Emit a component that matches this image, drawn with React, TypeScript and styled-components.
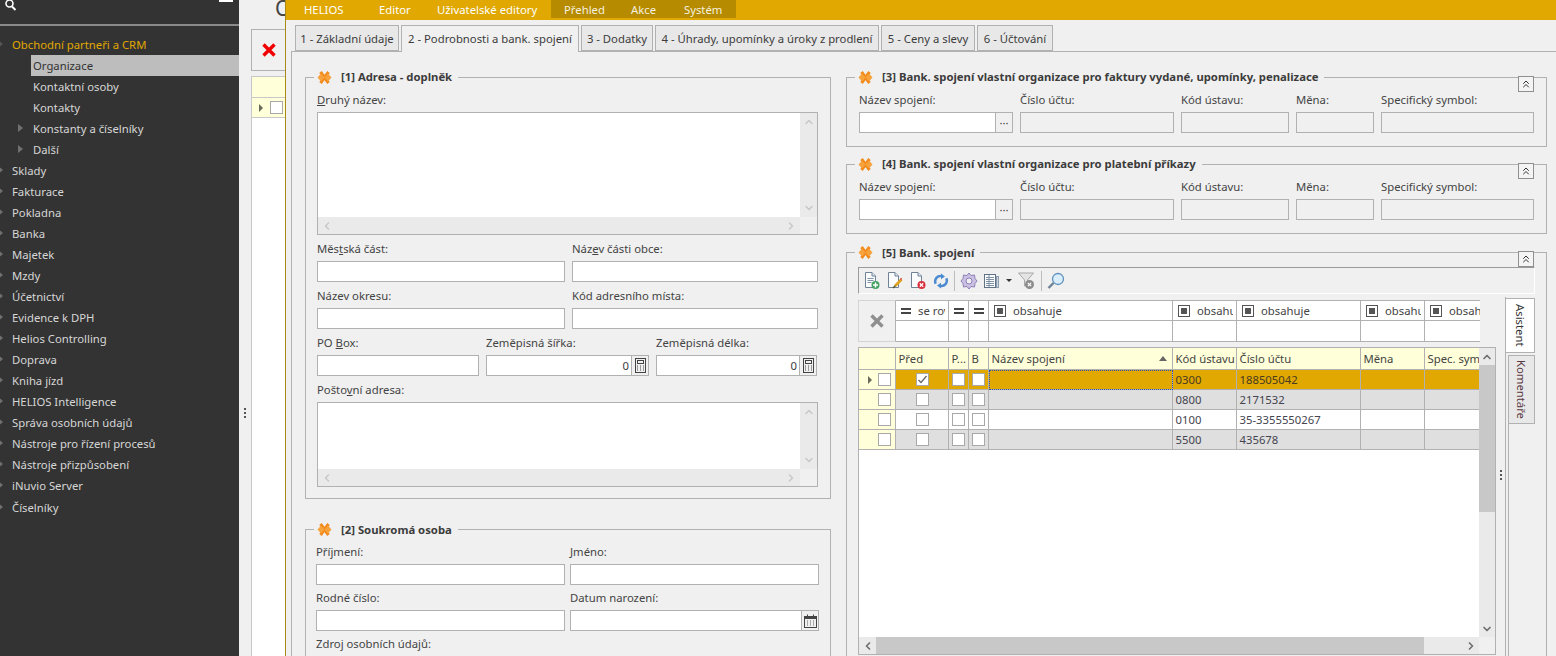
import React from "react";
import styled, { createGlobalStyle } from "styled-components";
import { ChevronUp, ChevronDown, ChevronLeft, ChevronRight, ChevronsUp } from "lucide-react";

const GlobalStyle = createGlobalStyle`
  html, body {
    margin: 0;
    padding: 0;
    background: #f0f0f0;
  }
  * {
    box-sizing: border-box;
  }
`;

const line = "#b1b1b1";
const gold = "#e0a800";

const Page = styled.div`
  display: flex;
  width: 1556px;
  height: 656px;
  overflow: hidden;
  font-family: "Noto Sans", "Open Sans", sans-serif;
  font-size: 11.3px;
  color: #3c3c3c;
`;

/* left navigation */
const Sidebar = styled.nav`
  flex: 0 0 239px;
  background: #333333;
  color: #d6d6d6;
`;

const SearchBar = styled.div`
  display: flex;
  justify-content: space-between;
  height: 26px;
  padding-right: 6px;
  border-bottom: 2px solid #8a8a8a;
  svg {
    margin: -1px 0 0 4px;
  }
`;

const SearchMark = styled.span`
  width: 14px;
  height: 2px;
  background: #ffffff;
`;

const Tree = styled.ul`
  list-style: none;
  margin: 7.5px 0 0;
  padding: 0;
`;

const TreeRow = styled.li<{ $level: number; $active?: boolean; $selected?: boolean }>`
  position: relative;
  height: 21.05px;
  line-height: 21px;
  margin-left: ${(p) => (p.$level ? 31 : 0)}px;
  padding-left: ${(p) => (p.$level ? 2 : 12)}px;
  color: ${(p) => (p.$active ? gold : p.$selected ? "#333333" : "#d6d6d6")};
  background: ${(p) => (p.$selected ? "#bdbdbd" : "transparent")};
`;

const TreeArrow = styled.i<{ $level: number; $open?: boolean }>`
  position: absolute;
  top: 6px;
  left: ${(p) => (p.$level ? -13 : -2)}px;
  width: 0;
  height: 0;
  border-style: solid;
  border-width: 4px 0 4px 5px;
  border-color: transparent transparent transparent ${(p) => (p.$open ? "#555555" : "#707070")};
`;

/* the window behind */
const BackPane = styled.div`
  flex: 0 0 46px;
  min-width: 0;
  display: flex;
  overflow: hidden;
  background: #f0f0f0;
`;

const Splitter = styled.div`
  flex: 0 0 12px;
  padding: 408px 0 0 5px;
`;

const Dots = styled.div`
  display: flex;
  flex-direction: column;
  gap: 2px;
  span {
    width: 2px;
    height: 2px;
    background: #555555;
  }
`;

const BackColumn = styled.div`
  flex: 1;
  min-width: 0;
  display: flex;
  flex-direction: column;
`;

const BackTitle = styled.div`
  height: 29px;
  padding-left: 24px;
  overflow: hidden;
  white-space: nowrap;
  font-size: 21px;
  line-height: 16px;
  color: #444444;
`;

const BackTools = styled.div`
  display: flex;
  align-items: center;
  height: 42px;
  padding-left: 10px;
  border: 1px solid ${line};
  border-right: 0;
`;

const BackGrid = styled.div`
  flex: 1;
  margin-top: 5px;
  background: #ffffff;
  border-left: 1px solid #c8c8c8;
`;

const BackHead = styled.div`
  height: 22px;
  background: #ffffd9;
  border-top: 1px solid #c8c8c8;
  border-bottom: 1px solid #c8c8c8;
`;

const BackRow = styled.div`
  display: flex;
  align-items: center;
  height: 20px;
  padding-left: 7px;
  gap: 7px;
  overflow: hidden;
  background: #ffffd9;
  border-bottom: 1px solid #c8c8c8;
`;

/* front window */
const Window = styled.main`
  flex: 1;
  min-width: 0;
  display: flex;
  flex-direction: column;
  border-left: 1px solid #a98a12;
  background: #f0f0f0;
`;

const MenuBar = styled.div`
  display: flex;
  flex: 0 0 20px;
  height: 20px;
  padding-left: 18px;
  background: ${gold};
  color: #ffffff;
  line-height: 19px;
`;

const MenuItem = styled.span<{ $w: number }>`
  width: ${(p) => p.$w}px;
  white-space: nowrap;
`;

const MenuGroup = styled.div`
  display: flex;
  height: 18px;
  padding-left: 13px;
  background: #b68b00;
  color: #f4f0df;
`;

const TabStrip = styled.div`
  display: flex;
  gap: 2px;
  height: 32px;
  padding: 5px 0 0 9px;
  margin-bottom: -1px;
`;

const Tab = styled.div<{ $w: number; $on?: boolean }>`
  position: relative;
  z-index: ${(p) => (p.$on ? 1 : 0)};
  width: ${(p) => p.$w}px;
  height: ${(p) => (p.$on ? 27 : 26)}px;
  text-align: center;
  line-height: 25px;
  white-space: nowrap;
  background: ${(p) => (p.$on ? "#f0f0f0" : "#e8e8e8")};
  border: 1px solid ${line};
  border-bottom: ${(p) => (p.$on ? "0" : `1px solid ${line}`)};
`;

const TabPanel = styled.div`
  flex: 1;
  min-height: 0;
  display: flex;
  gap: 15px;
  margin-left: 5px;
  padding: 17px 9px 0 13px;
  overflow: hidden;
  border-top: 1px solid ${line};
  border-left: 1px solid ${line};
`;

const LeftColumn = styled.div`
  flex: 0 0 526px;
  display: flex;
  flex-direction: column;
  gap: 22px;
`;

const RightColumn = styled.div`
  flex: 1;
  min-width: 0;
  display: flex;
  flex-direction: column;
  gap: 9px;
`;

const Group = styled.fieldset<{
  $top?: number;
  $right?: number;
  $bottom?: number;
  $left?: number;
  $shift?: number;
  $lift?: boolean;
}>`
  position: relative;
  min-width: 0;
  margin: ${(p) => p.$shift ?? 0}px 0 0;
  padding: ${(p) => p.$top ?? 8}px ${(p) => p.$right ?? 12}px ${(p) => p.$bottom ?? 13}px ${(p) => p.$left ?? 12}px;
  border: 1px solid ${line};
  legend {
    margin-left: ${(p) => 8 - (p.$left ?? 12)}px;
  }
  legend span {
    margin-bottom: ${(p) => (p.$lift ? 2 : 0)}px;
  }
`;

const GroupTitle = styled.legend`
  display: flex;
  align-items: center;
  gap: 9px;
  height: 16px;
  padding: 0 6px 0 3px;
  font-weight: 700;
  color: #3c3c3c;
`;

const Collapse = styled.button`
  position: absolute;
  top: -9px;
  right: 12px;
  display: flex;
  align-items: center;
  justify-content: center;
  width: 16px;
  height: 16px;
  padding: 0;
  background: #f4f4f4;
  border: 1px solid #8f8f8f;
  color: #333333;
`;

const Stack = styled.div<{ $gap: number }>`
  display: flex;
  flex-direction: column;
  gap: ${(p) => p.$gap}px;
`;

const Columns = styled.div<{ $cols: string; $gap: number }>`
  display: grid;
  grid-template-columns: ${(p) => p.$cols};
  column-gap: ${(p) => p.$gap}px;
`;

const Field = styled.div`
  min-width: 0;
`;

const Label = styled.div`
  height: 19px;
  line-height: 13px;
  white-space: nowrap;
  color: #444444;
`;

const Input = styled.div<{ $off?: boolean; $right?: boolean }>`
  flex: 1;
  min-width: 0;
  height: 21px;
  padding-right: 2px;
  line-height: 19px;
  text-align: ${(p) => (p.$right ? "right" : "left")};
  background: ${(p) => (p.$off ? "#f0f0f0" : "#ffffff")};
  border: 1px solid ${line};
`;

const InputRow = styled.div`
  display: flex;
`;

const SideButton = styled.div`
  flex: 0 0 17px;
  display: flex;
  align-items: center;
  justify-content: center;
  height: 21px;
  line-height: 14px;
  background: #f0f0f0;
  border: 1px solid ${line};
  border-left: 0;
  color: #444444;
`;

/* multi line box with its scrollbars */
const Memo = styled.div<{ $h: number }>`
  display: grid;
  grid-template-columns: 1fr 17px;
  grid-template-rows: 1fr 17px;
  height: ${(p) => p.$h}px;
  background: #ffffff;
  border: 1px solid ${line};
`;

const Track = styled.div<{ $dir: "row" | "column" }>`
  display: flex;
  flex-direction: ${(p) => p.$dir};
  justify-content: space-between;
  align-items: center;
  padding: ${(p) => (p.$dir === "row" ? "0 3px" : "3px 0")};
  background: #eaeaea;
  color: #c8c8c8;
`;

const Corner = styled.div`
  background: #f0f0f0;
`;

/* grid in group 5 */
const Toolbar = styled.div`
  display: flex;
  align-items: center;
  height: 27px;
  padding-left: 5px;
  border-top: 1px solid #9b9b9b;
  border-left: 1px solid #9b9b9b;
  border-right: 1px solid #ffffff;
  border-bottom: 1px solid #ffffff;
  svg {
    display: block;
  }
`;

const ToolGroup = styled.div<{ $gap: number }>`
  display: flex;
  align-items: center;
  gap: ${(p) => p.$gap}px;
`;

const ToolSep = styled.span`
  width: 1px;
  height: 20px;
  margin: 0 5px;
  background: #bcbcbc;
`;

const GridRow = styled.div`
  display: flex;
  margin-top: 3px;
  height: 361px;
`;

const GridStack = styled.div`
  flex: 0 0 638px;
  padding-top: 3px;
`;

const Gutter = styled.div`
  flex: 0 0 9px;
  display: flex;
  align-items: center;
  padding: 0 0 5px 4px;
`;

const FilterBox = styled.div`
  display: flex;
  width: 622px;
  height: 42px;
  overflow: hidden;
`;

const FilterClear = styled.div`
  flex: 0 0 38px;
  display: flex;
  align-items: center;
  justify-content: center;
  border: 1px solid #d4d4d4;
  border-right-color: ${line};
`;

const FilterCols = styled.div`
  flex: 1;
  min-width: 0;
  overflow: hidden;
`;

const columns = "53px 20px 20px 184px 64px 124px 64px 64px";

const FilterLine = styled.div<{ $h: number }>`
  display: grid;
  grid-template-columns: ${columns};
  height: ${(p) => p.$h}px;
`;

const FilterCell = styled.div`
  display: flex;
  align-items: center;
  gap: 7px;
  padding: 0 3px 0 5px;
  overflow: hidden;
  white-space: nowrap;
  background: #ffffff;
  border-right: 1px solid ${line};
  border-bottom: 1px solid ${line};
  svg {
    flex: none;
  }
`;

const FilterTop = styled(FilterCell)`
  border-top: 1px solid ${line};
  color: #444444;
`;

const FilterText = styled.span`
  min-width: 0;
  overflow: hidden;
`;

const DataBox = styled.div`
  display: grid;
  grid-template-columns: 1fr 16px;
  grid-template-rows: 1fr 17px;
  height: 308px;
  margin-top: 5px;
  background: #ffffff;
  border: 1px solid ${line};
`;

const DataScroll = styled.div`
  min-width: 0;
  overflow: hidden;
`;

const DataRow = styled.div<{ $bg: string }>`
  display: grid;
  grid-template-columns: 37px ${columns};
  height: 20px;
  background: ${(p) => p.$bg};
  color: ${(p) => (p.$bg === gold ? "#4a3a20" : "#44444f")};
`;

const HeadRow = styled(DataRow)`
  height: 22px;
  color: #444444;
`;

const Cell = styled.div<{ $center?: boolean; $focus?: boolean }>`
  display: flex;
  align-items: center;
  justify-content: ${(p) => (p.$center ? "center" : "flex-start")};
  padding-left: ${(p) => (p.$center ? 0 : 2.5)}px;
  overflow: hidden;
  white-space: nowrap;
  border-right: 1px solid ${line};
  border-bottom: 1px solid ${line};
  outline: ${(p) => (p.$focus ? "1px dotted #2a4fb0" : "none")};
  outline-offset: -1px;
`;

const Sort = styled.i`
  margin-left: auto;
  margin-right: 5px;
  width: 0;
  height: 0;
  border-style: solid;
  border-width: 0 4px 5px 4px;
  border-color: transparent transparent #666666 transparent;
`;

const MarkerCell = styled(Cell)`
  justify-content: flex-end;
  gap: 6px;
  padding-right: 4px;
  background: #ffffd9;
`;

const RowArrow = styled.i`
  flex: none;
  width: 0;
  height: 0;
  border-style: solid;
  border-width: 4px 0 4px 4px;
  border-color: transparent transparent transparent #6a6a5a;
`;

const Check = styled.span`
  flex: none;
  display: flex;
  align-items: center;
  justify-content: center;
  width: 13px;
  height: 13px;
  background: #ffffff;
  border: 1px solid #a8a8a8;
`;

const DataV = styled.div`
  display: flex;
  flex-direction: column;
  align-items: center;
  background: #eaeaea;
  color: #707070;
`;

const ArrowSlot = styled.div`
  flex: 0 0 17px;
  display: flex;
  align-items: center;
  justify-content: center;
`;

const ThumbV = styled.div`
  flex: 0 0 147px;
  width: 100%;
  background: #c8c8c8;
`;

const DataH = styled.div`
  display: flex;
  align-items: center;
  background: #eaeaea;
  color: #707070;
`;

const ThumbH = styled.div`
  flex: 0 0 548px;
  height: 100%;
  background: #c8c8c8;
`;

const Spring = styled.div`
  flex: 1;
`;

/* tabs standing on end at the right */
const SideRail = styled.div`
  flex: 0 0 30px;
  display: flex;
  flex-direction: column;
  padding-top: 1px;
  border-left: 1px solid ${line};
`;

const SideTab = styled.div<{ $h: number; $on?: boolean }>`
  flex: 0 0 ${(p) => p.$h}px;
  display: flex;
  align-items: center;
  justify-content: center;
  margin-left: ${(p) => (p.$on ? 0 : 2)}px;
  margin-bottom: ${(p) => (p.$on ? 2 : 0)}px;
  writing-mode: vertical-rl;
  background: ${(p) => (p.$on ? "#ffffff" : "#e8e8e8")};
  border: 1px solid ${line};
  border-left: ${(p) => (p.$on ? "0" : `1px solid ${line}`)};
  color: ${(p) => (p.$on ? "#333333" : "#5a3a44")};
`;

const SideRest = styled.div`
  flex: 1;
  margin-left: 2px;
  border-left: 1px solid ${line};
`;

/* drawings */
const Star = () => (
  <svg width="15" height="13" viewBox="0 0 15 13">
    <path d="M3.5 1 L11.5 12 M11.5 1 L3.5 12" stroke="#f28a1c" strokeWidth="3" />
    <path d="M0.5 6.5 L4 2.5 L7.5 6.5 L4 10.5 Z M14.5 6.5 L11 2.5 L7.5 6.5 L11 10.5 Z" fill="#f6a33d" />
  </svg>
);

const Calculator = () => (
  <svg width="11" height="15" viewBox="0 0 11 15" fill="none">
    <rect x="0.5" y="0.5" width="10" height="14" stroke="#444" />
    <rect x="2.5" y="2.5" width="6" height="3" stroke="#444" />
    <path d="M2 8h1M5 8h1M8 8h1M2 10h1M5 10h1M8 10h1M2 12h1M5 12h1M8 12h1" stroke="#444" />
  </svg>
);

const Calendar = () => (
  <svg width="13" height="14" viewBox="0 0 13 14" fill="none">
    <rect x="0.5" y="2.5" width="12" height="11" stroke="#444" />
    <rect x="1" y="3" width="11" height="2" fill="#444" />
    <path d="M3.5 0.5v3M9.5 0.5v3" stroke="#444" />
    <path d="M3 7h1M6 7h1M9 7h1M3 9h1M6 9h1M9 9h1M3 11h1M6 11h1M9 11h1" stroke="#666" />
  </svg>
);

const EqualMark = () => (
  <svg width="10" height="6" viewBox="0 0 10 6">
    <path d="M0 0h10v2H0zM0 4h10v2H0z" fill="#444" />
  </svg>
);

const BoxMark = () => (
  <svg width="12" height="12" viewBox="0 0 12 12">
    <rect x="0.5" y="0.5" width="11" height="11" fill="none" stroke="#555" />
    <rect x="3" y="3" width="6" height="6" fill="#555" />
  </svg>
);

const CrossMark = () => (
  <svg width="14" height="14" viewBox="0 0 14 14">
    <path d="M1.5 1.5 L12.5 12.5 M12.5 1.5 L1.5 12.5" stroke="#8f8f8f" strokeWidth="3.4" />
  </svg>
);

const RedCross = () => (
  <svg width="14" height="14" viewBox="0 0 14 14">
    <path d="M1.5 1.5 L12.5 12.5 M12.5 1.5 L1.5 12.5" stroke="#f00000" strokeWidth="3.4" />
  </svg>
);

const Tick = () => (
  <svg width="11" height="11" viewBox="0 0 11 11">
    <path d="M1.5 6 L4 8.5 L9.5 2" fill="none" stroke="#666" strokeWidth="1.3" />
  </svg>
);

const Sheet = () => (
  <>
    <path d="M1.5 0.5 H8 L11.5 4 V15.5 H1.5 Z" fill="#fbfcfe" stroke="#6f8296" />
    <path d="M8 0.5 V4 H11.5" fill="#dfe8f1" stroke="#6f8296" />
  </>
);

const NewIcon = () => (
  <svg width="18" height="18" viewBox="0 0 18 18">
    <Sheet />
    <path d="M3.5 6.5h6M3.5 8.5h6M3.5 10.5h4" stroke="#8093a6" />
    <circle cx="11.5" cy="13" r="4" fill="#45a263" />
    <path d="M11.5 10.5v5M9 13h5" stroke="#fff" strokeWidth="1.4" />
  </svg>
);

const EditIcon = () => (
  <svg width="18" height="18" viewBox="0 0 18 18">
    <Sheet />
    <path d="M14.5 7.5 L8 14" stroke="#e0a020" strokeWidth="2.6" />
    <path d="M14.5 7.5 L13.5 6.5" stroke="#d05040" strokeWidth="2" />
    <path d="M8.3 13.7 L6 16" stroke="#553" strokeWidth="1.4" />
  </svg>
);

const DeleteIcon = () => (
  <svg width="18" height="18" viewBox="0 0 18 18">
    <Sheet />
    <circle cx="11.5" cy="13" r="4" fill="#d8303c" />
    <path d="M9.8 11.3 L13.2 14.7 M13.2 11.3 L9.8 14.7" stroke="#fff" strokeWidth="1.3" />
  </svg>
);

const RefreshIcon = () => (
  <svg width="16" height="18" viewBox="0 0 18 18" fill="none">
    <path d="M3 12 C1 7 5 2.5 10 3.5" stroke="#4c8bd0" strokeWidth="2.8" />
    <path d="M15 6 C17 11 13 15.5 8 14.5" stroke="#4c8bd0" strokeWidth="2.8" />
    <path d="M9 0.5 L13.5 3.8 L9 7 Z" fill="#4c8bd0" />
    <path d="M9 11 L4.5 14.2 L9 17.5 Z" fill="#4c8bd0" />
  </svg>
);

const GearIcon = () => (
  <svg width="18" height="18" viewBox="0 0 18 18">
    <path
      d="M9 1 L11 3.5 L14.5 3 L15 6.5 L17 9 L15 11.5 L14.5 15 L11 14.5 L9 17 L7 14.5 L3.5 15 L3 11.5 L1 9 L3 6.5 L3.5 3 L7 3.5 Z"
      fill="#c9c0e2"
      stroke="#8f7fb8"
    />
    <circle cx="9" cy="9" r="3" fill="#f0f0f0" stroke="#8f7fb8" />
  </svg>
);

const ListIcon = () => (
  <svg width="16" height="16" viewBox="0 0 16 16" fill="none">
    <rect x="0.5" y="1.5" width="11" height="13" fill="#fafcff" stroke="#5f7286" />
    <path d="M2 4.5h8M2 6.5h8M2 8.5h8M2 10.5h8M2 12.5h8M5 2v12" stroke="#7f91a3" />
    <rect x="12.5" y="3.5" width="2" height="11" fill="#cfd8e2" stroke="#8c9cac" />
  </svg>
);

const DropMark = styled.i`
  margin: 0 6px;
  width: 0;
  height: 0;
  border-style: solid;
  border-width: 3px 3px 0 3px;
  border-color: #333333 transparent transparent transparent;
`;

const FunnelIcon = () => (
  <svg width="18" height="18" viewBox="0 0 18 18">
    <path d="M0.5 1 H15.5 L9.5 8 V13 L6.5 14 V8 Z" fill="#e4e4e4" stroke="#a8a8a8" />
    <circle cx="11.5" cy="12.5" r="4.5" fill="#8c8c8c" />
    <path d="M9.8 10.8 L13.2 14.2 M13.2 10.8 L9.8 14.2" stroke="#fff" strokeWidth="1.2" />
  </svg>
);

const LensIcon = () => (
  <svg width="18" height="18" viewBox="0 0 18 18">
    <circle cx="11" cy="7" r="5.5" fill="#d9edfb" stroke="#5f93bd" strokeWidth="1.3" />
    <path d="M6.5 11 L1.5 16" stroke="#6f8296" strokeWidth="2.4" />
  </svg>
);

const SearchIcon = () => (
  <svg width="14" height="14" viewBox="0 0 14 14" fill="none">
    <circle cx="5.5" cy="4.5" r="3.5" stroke="#fff" strokeWidth="1.6" />
    <path d="M8 7.5 L11.5 11" stroke="#fff" strokeWidth="2" />
  </svg>
);

const treeItems = [
  { text: "Obchodní partneři a CRM", level: 0, active: true, arrow: "open" },
  { text: "Organizace", level: 1, selected: true },
  { text: "Kontaktní osoby", level: 1 },
  { text: "Kontakty", level: 1 },
  { text: "Konstanty a číselníky", level: 1, arrow: "closed" },
  { text: "Další", level: 1, arrow: "closed" },
  ...[
    "Sklady",
    "Fakturace",
    "Pokladna",
    "Banka",
    "Majetek",
    "Mzdy",
    "Účetnictví",
    "Evidence k DPH",
    "Helios Controlling",
    "Doprava",
    "Kniha jízd",
    "HELIOS Intelligence",
    "Správa osobních údajů",
    "Nástroje pro řízení procesů",
    "Nástroje přizpůsobení",
    "iNuvio Server",
    "Číselníky",
  ].map((text) => ({ text, level: 0, arrow: "closed" })),
] as { text: string; level: number; active?: boolean; selected?: boolean; arrow?: string }[];

const tabs = [
  { text: "1 - Základní údaje", w: 104 },
  { text: "2 - Podrobnosti a bank. spojení", w: 178, on: true },
  { text: "3 - Dodatky", w: 72 },
  { text: "4 - Úhrady, upomínky a úroky z prodlení", w: 224 },
  { text: "5 - Ceny a slevy", w: 94 },
  { text: "6 - Účtování", w: 76 },
];

const rows = [
  { bg: gold, code: "0300", account: "188505042", checked: true, focus: true },
  { bg: "#dfdfdf", code: "0800", account: "2171532" },
  { bg: "#ffffff", code: "0100", account: "35-3355550267" },
  { bg: "#dfdfdf", code: "5500", account: "435678" },
];

const filterTops = ["se rovná", "", "", "obsahuje", "obsahuje", "obsahuje", "obsahuje", "obsahuje"];

const ThreeDots = () => (
  <Dots>
    <span />
    <span />
    <span />
  </Dots>
);

const MemoBox: React.FC<{ height: number }> = ({ height }) => (
  <Memo $h={height}>
    <div />
    <Track $dir="column">
      <ChevronUp size={12} strokeWidth={3} />
      <ChevronDown size={12} strokeWidth={3} />
    </Track>
    <Track $dir="row">
      <ChevronLeft size={12} strokeWidth={3} />
      <ChevronRight size={12} strokeWidth={3} />
    </Track>
    <Corner />
  </Memo>
);

const GroupHead: React.FC<{ children: React.ReactNode }> = ({ children }) => (
  <GroupTitle>
    <Star />
    <span>{children}</span>
  </GroupTitle>
);

const CollapseButton = () => (
  <Collapse>
    <ChevronsUp size={12} strokeWidth={2} />
  </Collapse>
);

const BankFields = () => (
  <Columns $cols="154px 154px 108px 78px 153px" $gap={7}>
    <Field>
      <Label>Název spojení:</Label>
      <InputRow>
        <Input />
        <SideButton>···</SideButton>
      </InputRow>
    </Field>
    {["Číslo účtu:", "Kód ústavu:", "Měna:", "Specifický symbol:"].map((text) => (
      <Field key={text}>
        <Label>{text}</Label>
        <Input $off />
      </Field>
    ))}
  </Columns>
);

const App: React.FC = () => {
  return (
    <Page>
      <GlobalStyle />
      <Sidebar>
        <SearchBar>
          <SearchIcon />
          <SearchMark />
        </SearchBar>
        <Tree>
          {treeItems.map((item) => (
            <TreeRow key={item.text} $level={item.level} $active={item.active} $selected={item.selected}>
              {item.arrow && <TreeArrow $level={item.level} $open={item.arrow === "open"} />}
              {item.text}
            </TreeRow>
          ))}
        </Tree>
      </Sidebar>

      <BackPane>
        <Splitter>
          <ThreeDots />
        </Splitter>
        <BackColumn>
          <BackTitle>O</BackTitle>
          <BackTools>
            <RedCross />
          </BackTools>
          <BackGrid>
            <BackHead />
            <BackRow>
              <RowArrow />
              <Check />
            </BackRow>
          </BackGrid>
        </BackColumn>
      </BackPane>

      <Window>
        <MenuBar>
          <MenuItem $w={75}>HELIOS</MenuItem>
          <MenuItem $w={58}>Editor</MenuItem>
          <MenuItem $w={114}>Uživatelské editory</MenuItem>
          <MenuGroup>
            <MenuItem $w={67}>Přehled</MenuItem>
            <MenuItem $w={53}>Akce</MenuItem>
            <MenuItem $w={52}>Systém</MenuItem>
          </MenuGroup>
        </MenuBar>

        <TabStrip>
          {tabs.map((tab) => (
            <Tab key={tab.text} $w={tab.w} $on={tab.on}>
              {tab.text}
            </Tab>
          ))}
        </TabStrip>

        <TabPanel>
          <LeftColumn>
            <Group $bottom={11} $left={11} $lift>
              <GroupHead>[1] Adresa - doplněk</GroupHead>
              <Stack $gap={7}>
                <Field>
                  <Label>
                    <u>D</u>ruhý název:
                  </Label>
                  <MemoBox height={123} />
                </Field>
                <Columns $cols="248px 246px" $gap={7}>
                  <Field>
                    <Label>
                      Měs<u>t</u>ská část:
                    </Label>
                    <Input />
                  </Field>
                  <Field>
                    <Label>
                      Náz<u>e</u>v části obce:
                    </Label>
                    <Input />
                  </Field>
                </Columns>
                <Columns $cols="248px 246px" $gap={7}>
                  <Field>
                    <Label>Název okresu:</Label>
                    <Input />
                  </Field>
                  <Field>
                    <Label>Kód adresního místa:</Label>
                    <Input />
                  </Field>
                </Columns>
                <Columns $cols="162px 163px 161px" $gap={7}>
                  <Field>
                    <Label>
                      PO <u>B</u>ox:
                    </Label>
                    <Input />
                  </Field>
                  <Field>
                    <Label>Zeměpisná šířka:</Label>
                    <InputRow>
                      <Input $right>0</Input>
                      <SideButton>
                        <Calculator />
                      </SideButton>
                    </InputRow>
                  </Field>
                  <Field>
                    <Label>Zeměpisná délka:</Label>
                    <InputRow>
                      <Input $right>0</Input>
                      <SideButton>
                        <Calculator />
                      </SideButton>
                    </InputRow>
                  </Field>
                </Columns>
                <Field>
                  <Label>
                    Pošto<u>v</u>ní adresa:
                  </Label>
                  <MemoBox height={85} />
                </Field>
              </Stack>
            </Group>

            <Group $right={11} $bottom={0} $left={10}>
              <GroupHead>[2] Soukromá osoba</GroupHead>
              <Stack $gap={6}>
                <Columns $cols="249px 249px" $gap={5}>
                  <Field>
                    <Label>Příjmení:</Label>
                    <Input />
                  </Field>
                  <Field>
                    <Label>Jméno:</Label>
                    <Input />
                  </Field>
                </Columns>
                <Columns $cols="249px 249px" $gap={5}>
                  <Field>
                    <Label>Rodné číslo:</Label>
                    <Input />
                  </Field>
                  <Field>
                    <Label>Datum narození:</Label>
                    <InputRow>
                      <Input />
                      <SideButton>
                        <Calendar />
                      </SideButton>
                    </InputRow>
                  </Field>
                </Columns>
                <Field>
                  <Label>Zdroj osobních údajů:</Label>
                  <Input />
                </Field>
              </Stack>
            </Group>
          </LeftColumn>

          <RightColumn>
            <Group $lift>
              <GroupHead>[3] Bank. spojení vlastní organizace pro faktury vydané, upomínky, penalizace</GroupHead>
              <CollapseButton />
              <BankFields />
            </Group>
            <Group $lift>
              <GroupHead>[4] Bank. spojení vlastní organizace pro platební příkazy</GroupHead>
              <CollapseButton />
              <BankFields />
            </Group>
            <Group $top={7} $right={11} $bottom={0} $left={11} $shift={1}>
              <GroupHead>[5] Bank. spojení</GroupHead>
              <CollapseButton />
              <Toolbar>
                <ToolGroup $gap={5}>
                  <NewIcon />
                  <EditIcon />
                  <DeleteIcon />
                  <RefreshIcon />
                </ToolGroup>
                <ToolSep />
                <ToolGroup $gap={6}>
                  <GearIcon />
                  <ListIcon />
                </ToolGroup>
                <DropMark />
                <FunnelIcon />
                <ToolSep />
                <LensIcon />
              </Toolbar>
              <GridRow>
                <GridStack>
                  <FilterBox>
                    <FilterClear>
                      <CrossMark />
                    </FilterClear>
                    <FilterCols>
                      <FilterLine $h={21}>
                        {filterTops.map((text, i) => (
                          <FilterTop key={i}>
                            {text === "se rovná" || text === "" ? <EqualMark /> : <BoxMark />}
                            {text && <FilterText>{text}</FilterText>}
                          </FilterTop>
                        ))}
                      </FilterLine>
                      <FilterLine $h={21}>
                        {filterTops.map((_, i) => (
                          <FilterCell key={i} />
                        ))}
                      </FilterLine>
                    </FilterCols>
                  </FilterBox>
                  <DataBox>
                    <DataScroll>
                      <HeadRow $bg="#ffffd9">
                        <Cell />
                        <Cell>Před</Cell>
                        <Cell>P...</Cell>
                        <Cell>B</Cell>
                        <Cell>
                          Název spojení
                          <Sort />
                        </Cell>
                        <Cell>Kód ústavu</Cell>
                        <Cell>Číslo účtu</Cell>
                        <Cell>Měna</Cell>
                        <Cell>Spec. symbol</Cell>
                      </HeadRow>
                      {rows.map((row) => (
                        <DataRow key={row.code} $bg={row.bg}>
                          <MarkerCell>
                            {row.focus && <RowArrow />}
                            <Check />
                          </MarkerCell>
                          <Cell $center>
                            <Check>{row.checked && <Tick />}</Check>
                          </Cell>
                          <Cell $center>
                            <Check />
                          </Cell>
                          <Cell $center>
                            <Check />
                          </Cell>
                          <Cell $focus={row.focus} />
                          <Cell>{row.code}</Cell>
                          <Cell>{row.account}</Cell>
                          <Cell />
                          <Cell />
                        </DataRow>
                      ))}
                    </DataScroll>
                    <DataV>
                      <ArrowSlot>
                        <ChevronUp size={12} strokeWidth={3.5} />
                      </ArrowSlot>
                      <ThumbV />
                      <Spring />
                      <ArrowSlot>
                        <ChevronDown size={12} strokeWidth={3.5} />
                      </ArrowSlot>
                    </DataV>
                    <DataH>
                      <ArrowSlot>
                        <ChevronLeft size={12} strokeWidth={3.5} />
                      </ArrowSlot>
                      <ThumbH />
                      <Spring />
                      <ArrowSlot>
                        <ChevronRight size={12} strokeWidth={3.5} />
                      </ArrowSlot>
                    </DataH>
                    <Corner />
                  </DataBox>
                </GridStack>
                <Gutter>
                  <ThreeDots />
                </Gutter>
                <SideRail>
                  <SideTab $h={55} $on>
                    Asistent
                  </SideTab>
                  <SideTab $h={69}>Komentáře</SideTab>
                  <SideRest />
                </SideRail>
              </GridRow>
            </Group>
          </RightColumn>
        </TabPanel>
      </Window>
    </Page>
  );
};

export default App;
